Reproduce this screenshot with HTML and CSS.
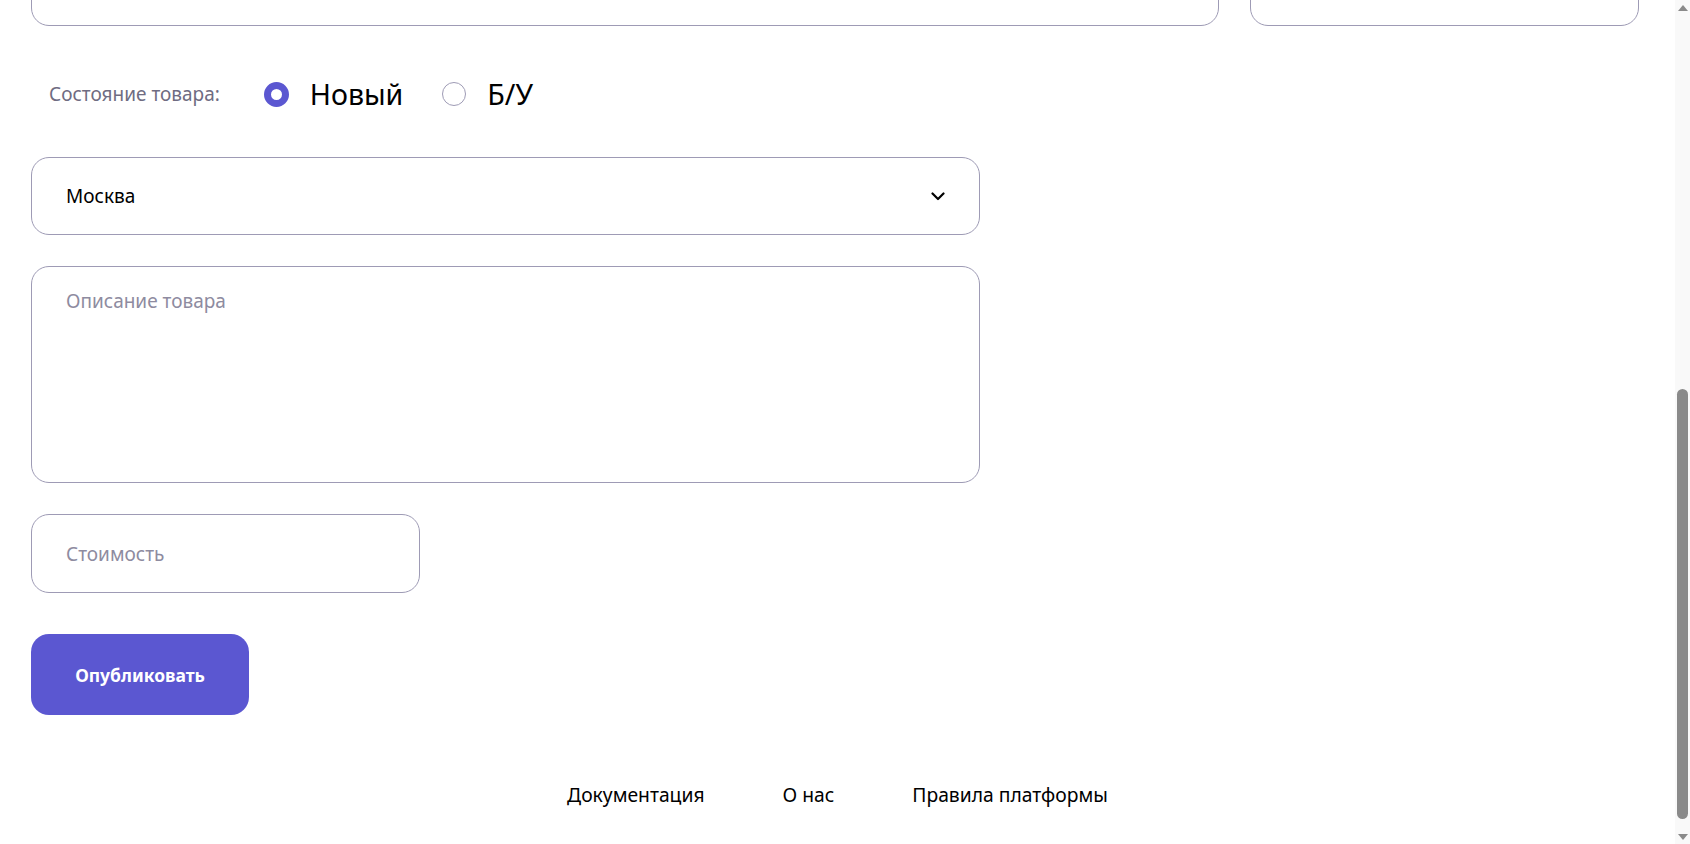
FILE: index.html
```html
<!DOCTYPE html>
<html lang="ru">
<head>
<meta charset="utf-8">
<title>Новое объявление</title>
<link rel="stylesheet" href="styles.css">
</head>
<body>
<div class="viewport">
  <div class="scroller">
    <div class="page">
      <div class="upper"></div>
      <form class="form">
        <div class="row-top">
          <div class="field field-wide"></div>
          <div class="field field-narrow"></div>
        </div>

        <div class="condition">
          <span class="condition-label">Состояние товара:</span>
          <label class="radio">
            <input type="radio" name="state" checked>
            <span class="radio-text">Новый</span>
          </label>
          <label class="radio">
            <input type="radio" name="state">
            <span class="radio-text">Б/У</span>
          </label>
        </div>

        <div class="select">
          <span class="select-value">Москва</span>
          <svg class="chevron" width="14" height="9" viewBox="0 0 14 9" aria-hidden="true">
            <path d="M1.5 1.5 L7 7 L12.5 1.5" fill="none" stroke="#000" stroke-width="2.2" stroke-linecap="round" stroke-linejoin="round"/>
          </svg>
        </div>

        <textarea class="textarea" placeholder="Описание товара"></textarea>

        <input class="price" type="text" placeholder="Стоимость">

        <button class="publish" type="button">Опубликовать</button>
      </form>

      <footer class="footer">
        <a class="footer-link" href="#">Документация</a>
        <a class="footer-link" href="#">О нас</a>
        <a class="footer-link" href="#">Правила платформы</a>
      </footer>
    </div>
  </div>

  <div class="scrollbar" aria-hidden="true">
    <div class="sb-arrow">
      <svg width="10" height="6" viewBox="0 0 10 6"><path d="M0 6 L5 0 L10 6 Z" fill="#8a8a8a"/></svg>
    </div>
    <div class="sb-track">
      <div class="sb-thumb"></div>
    </div>
    <div class="sb-arrow">
      <svg width="10" height="6" viewBox="0 0 10 6"><path d="M0 0 L10 0 L5 6 Z" fill="#8a8a8a"/></svg>
    </div>
  </div>
</div>
</body>
</html>
```

FILE: styles.css
```css
* {
  box-sizing: border-box;
}

html, body {
  margin: 0;
  padding: 0;
  background: #fff;
  font-family: "Noto Sans", "Liberation Sans", sans-serif;
  color: #000;
}

.viewport {
  display: flex;
  height: 100vh;
}

.scroller {
  flex: 1;
  min-width: 0;
  height: 100vh;
  overflow-y: scroll;
  scrollbar-width: none;
  display: flex;
  flex-direction: column-reverse;
}

.scroller::-webkit-scrollbar {
  display: none;
}

.page {
  flex-shrink: 0;
}

.upper {
  height: 702px;
}

.form {
  display: flex;
  flex-direction: column;
  align-items: flex-start;
  padding: 0 36px 0 31px;
}

.row-top {
  display: flex;
  gap: 31px;
  width: 100%;
}

.field {
  height: 80px;
  border: 1px solid #9e9bb5;
  border-radius: 18px;
}

.field-wide {
  flex: 1;
}

.field-narrow {
  width: 389px;
}

.condition {
  display: flex;
  align-items: center;
  height: 40px;
  margin-top: 48px;
  padding-left: 18px;
}

.condition-label {
  font-size: 19px;
  color: #6f6c82;
  margin-right: 44px;
}

.radio {
  display: flex;
  align-items: center;
  margin-right: 39px;
  cursor: pointer;
}

.radio input {
  appearance: none;
  -webkit-appearance: none;
  margin: 0;
  width: 24px;
  height: 24px;
  border-radius: 50%;
  border: 1px solid #9e9bb5;
  background: #fff;
}

.radio input:checked {
  width: 25px;
  height: 25px;
  border: 7px solid #5b57d1;
}

.radio-text {
  font-size: 28.5px;
  margin-left: 21px;
  line-height: 34px;
}

.select {
  margin-top: 43px;
  width: 949px;
  height: 78px;
  border: 1px solid #9e9bb5;
  border-radius: 18px;
  display: flex;
  align-items: center;
  justify-content: space-between;
  padding: 0 34px;
}

.select-value {
  font-size: 19px;
}

.textarea {
  margin-top: 31px;
  width: 949px;
  height: 217px;
  border: 1px solid #9e9bb5;
  border-radius: 18px;
  padding: 21px 34px;
  font-family: inherit;
  font-size: 19px;
  resize: none;
  outline: none;
}

.textarea::placeholder,
.price::placeholder {
  color: #8e8ba0;
}

.price {
  margin-top: 31px;
  width: 389px;
  height: 79px;
  border: 1px solid #9e9bb5;
  border-radius: 18px;
  padding: 0 34px;
  font-family: inherit;
  font-size: 19px;
  outline: none;
}

.publish {
  margin-top: 41px;
  width: 218px;
  height: 81px;
  border: none;
  border-radius: 18px;
  background: #5b57d1;
  color: #fff;
  font-family: inherit;
  font-size: 17.5px;
  font-weight: 700;
  cursor: pointer;
}

.footer {
  display: flex;
  justify-content: center;
  gap: 78px;
  padding: 66px 0 36px;
}

.footer-link {
  font-size: 19.3px;
  line-height: 27px;
  color: #000;
  text-decoration: none;
}

.scrollbar {
  width: 15px;
  flex-shrink: 0;
  height: 100vh;
  background: #f9f9f9;
  display: flex;
  flex-direction: column;
}

.sb-arrow {
  height: 15px;
  display: flex;
  align-items: center;
  justify-content: center;
}

.sb-track {
  flex: 1;
  display: flex;
  flex-direction: column;
  justify-content: flex-end;
  padding: 0 2px 10px;
}

.sb-thumb {
  height: 430px;
  border-radius: 6px;
  background: #8a8a8a;
}
```
